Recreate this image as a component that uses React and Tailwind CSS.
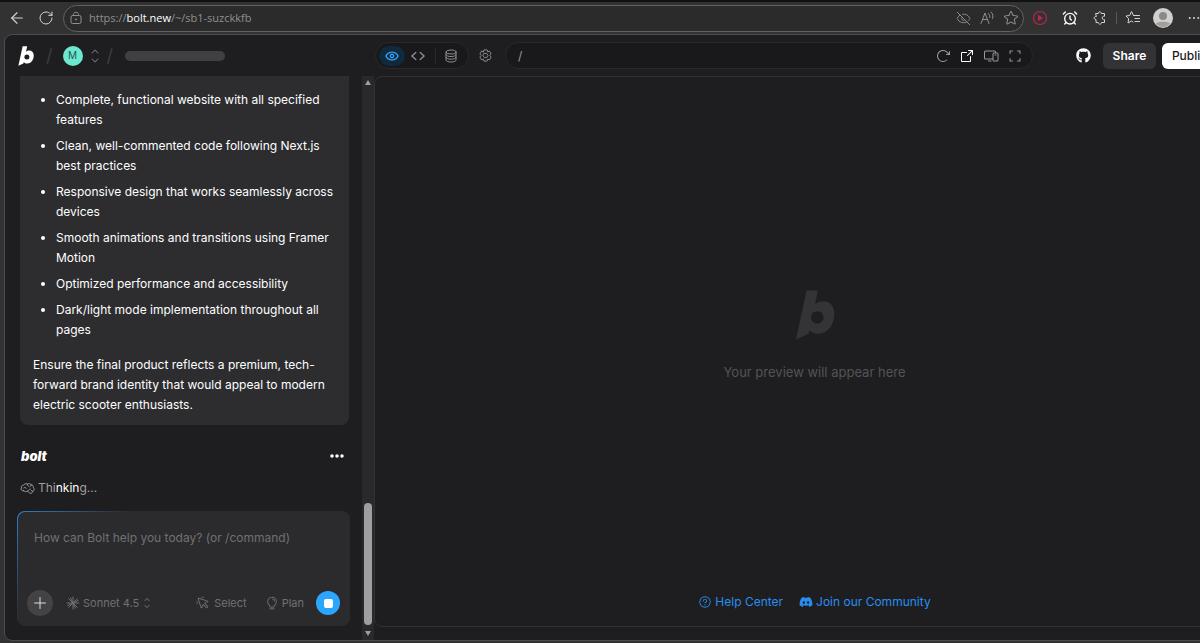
import { AlarmClock, ArrowLeft, EyeOff, RotateCw } from "lucide-react";
import { FaDiscord, FaGithub } from "react-icons/fa";
import {
    PiArrowClockwise,
    PiArrowSquareOut,
    PiCaretUpDown,
    PiCodeSimpleBold,
    PiCornersOut,
    PiCursorClick,
    PiDevices,
    PiDotsThreeBold,
    PiDotsThreeOutlineFill,
    PiEyeBold,
    PiLightbulb,
    PiPlus,
    PiQuestion,
    PiStar,
} from "react-icons/pi";

const features = [
    "Complete, functional website with all specified features",
    "Clean, well-commented code following Next.js best practices",
    "Responsive design that works seamlessly across devices",
    "Smooth animations and transitions using Framer Motion",
    "Optimized performance and accessibility",
    "Dark/light mode implementation throughout all pages",
];

const BoltMark = ({ className }) => (
    <svg viewBox="0 0 124 152" fill="currentColor" className={className} aria-hidden="true">
        <path
            fillRule="evenodd"
            d="M36 0H71L62 43C69 36 78 33 88 33C109 33 122 49 122 72C122 108 100 134 72 134C60 134 51 130 45 122L42 134L3 152ZM69 64A19 19 0 1 0 69 103A19 19 0 1 0 69 64Z"
        />
    </svg>
);

const LineIcon = ({ children, className = "size-4" }) => (
    <svg
        viewBox="0 0 16 16"
        fill="none"
        stroke="currentColor"
        strokeLinecap="round"
        strokeLinejoin="round"
        className={className}
        aria-hidden="true"
    >
        {children}
    </svg>
);

const LockIcon = () => (
    <LineIcon className="size-4 shrink-0">
        <rect x="3" y="5.5" width="10" height="8" rx="1.5" />
        <path d="M5.5 5.5V4.5C5.5 1.500 10.500 1.500 10.500 4.500V5.500" />
        <circle cx="8" cy="9.500" r=".6" fill="currentColor" />
    </LineIcon>
);

const ReadAloudIcon = () => (
    <LineIcon>
        <path d="M2 13.500L6 3L10 13.500M3.500 9.500H8.500M9.500 3.500C10.700 4.700 11 6 10.700 7.500M12 2C14 3.700 14.500 6.500 13.500 8.500" />
    </LineIcon>
);

const MediaIcon = () => (
    <svg viewBox="0 0 16 16" className="size-4" aria-hidden="true">
        <circle cx="8" cy="8" r="6.500" fill="none" stroke="#b8284c" strokeWidth="1.200" />
        <path d="M6 4.800L11 8L6 11.200Z" fill="#b8284c" />
    </svg>
);

const ExtensionsIcon = () => (
    <LineIcon>
        <path d="M4 3.500H6.300C6 1.300 9.500 1.300 9.200 3.500H12.500V6.300H11.500C9.700 6.600 9.700 9.300 11.500 9.600H12.500V12.500H9.500C9.500 14.700 6.200 14.700 6.200 12.500H4V9.500C1.500 9.800 1.500 6.200 4 6.500Z" />
    </LineIcon>
);

const FavoritesIcon = () => (
    <LineIcon>
        <path d="M8.500 5.500L6.500 1.500L4.700 5.500L1 6L3.700 8.800L3 13L6.500 11L8 12M8.500 5.500H14.500M10 8.500H14.500M10 11.500H14.500" />
    </LineIcon>
);

const DatabaseIcon = () => (
    <LineIcon>
        <ellipse cx="8" cy="4" rx="5" ry="2" />
        <path d="M3 4V12C3 14.700 13 14.700 13 12V4M3 6.700C3 9.300 13 9.300 13 6.700M3 9.300C3 12 13 12 13 9.300" />
    </LineIcon>
);

const SettingsIcon = () => (
    <LineIcon className="size-[15px]">
        <path d="M5.800 4L6.300 2H9.700L10.200 4L12.300 3.400L14 6.300L12.600 8L14 9.700L12.300 12.600L10.200 12L9.700 14H6.300L5.800 12L3.700 12.600L2 9.700L3.400 8L2 6.300L3.700 3.400Z" />
        <path d="M6.700 5.700H9.300L10.600 8L9.300 10.300H6.700L5.400 8Z" />
    </LineIcon>
);

const BrainIcon = () => (
    <LineIcon className="size-[15px]">
        <path d="M4 10.500C1.500 11 0.500 8.500 1.500 7.300C1 5.500 2.500 4.300 3.800 4.500C4.700 2.700 6.700 2.500 7.800 3.300C9.300 2.300 11.300 2.900 11.800 4C13.500 4 14.500 5.500 14.200 7C15.800 8.300 15.200 10.700 13.500 11C13.300 13 11 14 9.800 12.500L8 10.700C6.500 11.800 5 11.500 4 10.500Z" />
        <path d="M4 7.300C5 6.300 6.300 6.700 6.500 7.800M7.800 3.300C7.500 4.500 8 5.200 9 5.500M11.800 4C11.800 5.500 11 6 10.500 6.200M8 10.700C9.500 10.500 9.500 8.700 11 8.500M13.500 11C12.700 11 12 10.500 12 10" />
    </LineIcon>
);

const SparkIcon = () => (
    <LineIcon>
        <path d="M8 2V14M2 8H14M3.700 3.700L12.300 12.300M12.300 3.700L3.700 12.300M5.500 2.800L10.500 13.200M13.200 5.500L2.800 10.500" />
    </LineIcon>
);

const BrowserBar = () => (
    <div className="flex h-[34px] shrink-0 items-center overflow-hidden border-t-2 border-[#111111] bg-[#323232] pl-2 text-[#d4d4d4]">
        <button type="button" aria-label="Back" className="shrink-0">
            <ArrowLeft className="size-[18px]" strokeWidth={1.5} />
        </button>
        <button type="button" aria-label="Refresh" className="ml-3 shrink-0">
            <RotateCw className="size-4" strokeWidth={1.5} />
        </button>
        <div className="ml-[9px] flex h-[27px] min-w-0 flex-1 items-center rounded-full border border-[#636363] bg-[#2b2b2b] px-1 text-[#8f8f8f]">
            <LockIcon />
            <p className="ml-[5px] flex-1 truncate font-['Open_Sans','Noto_Sans',sans-serif] text-[11px]">
                https://<span className="text-white">bolt.new</span>/~/sb1-suzckkfb
            </p>
            <div className="flex items-center gap-2">
                <button type="button" aria-label="Tracking prevention">
                    <EyeOff className="size-[15px]" strokeWidth={1.5} />
                </button>
                <button type="button" aria-label="Read aloud">
                    <ReadAloudIcon />
                </button>
                <button type="button" aria-label="Bookmark">
                    <PiStar className="size-4" />
                </button>
            </div>
        </div>
        <div className="ml-2 flex shrink-0 items-center gap-[14px]">
            <button type="button" aria-label="Media">
                <MediaIcon />
            </button>
            <button type="button" aria-label="Alarm">
                <AlarmClock className="size-4 text-white" />
            </button>
            <button type="button" aria-label="Extensions">
                <ExtensionsIcon />
            </button>
        </div>
        <span className="mx-2 h-3 w-px bg-[#5a5a5a]" />
        <button type="button" aria-label="Favorites">
            <FavoritesIcon />
        </button>
        <button type="button" aria-label="Profile" className="ml-3 shrink-0">
            <svg viewBox="0 0 20 20" className="size-5" aria-hidden="true">
                <circle cx="10" cy="10" r="10" fill="#d2d0ce" />
                <circle cx="10" cy="8" r="4" fill="#8b8987" />
                <path d="M3 15.500C4 13 16 13 17 15.500C14 20 6 20 3 15.500Z" fill="#a19f9d" />
            </svg>
        </button>
        <button type="button" aria-label="More" className="-mr-[2px] ml-[13px] shrink-0">
            <PiDotsThreeBold className="size-4" />
        </button>
    </div>
);

const AppHeader = () => (
    <header className="flex h-[41px] shrink-0 items-center">
        <div className="flex w-[370px] shrink-0 items-center pl-[13px]">
            <BoltMark className="h-5 w-4 text-white" />
            <span className="ml-3 text-lg text-[#3c3c3f]">/</span>
            <span className="ml-[10px] flex size-5 items-center justify-center rounded-full bg-[#6ee7cf] text-[10px] text-[#1d5b52]">M</span>
            <button type="button" aria-label="Switch workspace" className="ml-1 text-[#77777a]">
                <PiCaretUpDown className="size-4" />
            </button>
            <span className="ml-1 text-lg text-[#3c3c3f]">/</span>
            <span className="ml-3 h-[10px] w-[100px] rounded-full bg-[#404042]" />
        </div>
        <div className="flex h-[27px] w-[94px] shrink-0 items-center rounded-full border border-[#29292c] bg-[#19191b] px-[3px] text-[#8f8f93]">
            <button type="button" aria-label="Preview" className="flex h-5 w-[26px] items-center justify-center rounded-full bg-[#10293c] text-[#349df4]">
                <PiEyeBold className="size-[14px]" />
            </button>
            <button type="button" aria-label="Code" className="flex h-5 w-[26px] items-center justify-center">
                <PiCodeSimpleBold className="size-[14px]" />
            </button>
            <span className="ml-1 h-4 w-px bg-[#29292c]" />
            <button type="button" aria-label="Database" className="flex h-5 flex-1 items-center justify-center">
                <DatabaseIcon />
            </button>
        </div>
        <button type="button" aria-label="Settings" className="ml-[9px] shrink-0 text-[#8f8f93]">
            <SettingsIcon />
        </button>
        <div className="ml-3 flex h-[27px] min-w-0 flex-1 items-center gap-2 rounded-full border border-[#29292c] bg-[#19191b] pr-[9px] pl-3 text-[#9a9a9e]">
            <input aria-label="Preview path" defaultValue="/" className="min-w-0 flex-1 bg-transparent text-[12px] outline-none" />
            <button type="button" aria-label="Reload">
                <PiArrowClockwise className="size-4" />
            </button>
            <button type="button" aria-label="Open in new tab" className="text-white">
                <PiArrowSquareOut className="size-4" />
            </button>
            <button type="button" aria-label="Devices">
                <PiDevices className="size-4" />
            </button>
            <button type="button" aria-label="Fullscreen">
                <PiCornersOut className="size-4" />
            </button>
        </div>
        <div className="mr-[31px] ml-[43px] flex shrink-0 items-center text-[12px]">
            <a href="#github" aria-label="GitHub" className="text-white">
                <FaGithub className="size-[15px]" />
            </a>
            <button type="button" className="ml-3 h-[26px] w-[53px] rounded-md bg-[#333336] font-semibold text-white">
                Share
            </button>
            <button type="button" className="ml-[6px] h-[26px] rounded-md bg-white px-[10px] font-medium text-[#19191b]">
                Publish
            </button>
        </div>
    </header>
);

const Composer = () => (
    <form className="mx-3 mt-auto mb-[14px] rounded-lg bg-linear-135 from-[#2c82cc] to-[#2b2b2e] to-25% p-px" onSubmit={(e) => e.preventDefault()}>
        <div className="rounded-[7px] bg-[#2b2b2e] text-[#707074]">
            <textarea
                aria-label="Message"
                placeholder="How can Bolt help you today? (or /command)"
                className="block h-[78px] w-full resize-none bg-transparent px-4 pt-4 text-[12px] leading-5 outline-none placeholder:text-[#707074]"
            />
            <div className="flex items-center px-[9px] pb-[9px] text-[11px]">
                <button type="button" aria-label="Add" className="flex size-[26px] items-center justify-center rounded-full bg-[#434345] text-[#dcdcdf]">
                    <PiPlus className="size-4" />
                </button>
                <button type="button" className="ml-3 flex items-center gap-[2px]">
                    <SparkIcon />
                    Sonnet 4.5
                    <PiCaretUpDown className="size-3" />
                </button>
                <button type="button" className="ml-auto flex items-center gap-1">
                    <PiCursorClick className="size-[14px]" />
                    Select
                </button>
                <button type="button" className="ml-[18px] flex items-center gap-[3px]">
                    <PiLightbulb className="size-[14px]" />
                    Plan
                </button>
                <button type="submit" aria-label="Stop" className="ml-3 flex size-6 items-center justify-center rounded-full bg-[#2ba6ff]">
                    <span className="size-[9px] rounded-[2px] bg-white" />
                </button>
            </div>
        </div>
    </form>
);

const ChatPanel = () => (
    <section className="flex w-[357px] shrink-0 flex-col overflow-hidden">
        <article className="mr-[13px] ml-[15px] rounded-b-lg bg-[#2d2d30] px-[13px] pt-[14px] pb-[10px] text-[12px] leading-5 text-white">
            <ul className="flex list-disc flex-col gap-[6px] pl-[23px]">
                {features.map((feature) => (
                    <li key={feature}>{feature}</li>
                ))}
            </ul>
            <p className="mt-[15px]">
                Ensure the final product reflects a premium, tech-forward brand identity that would appeal to modern electric scooter
                enthusiasts.
            </p>
        </article>
        <div className="mt-[21px] flex items-center justify-between pr-[17px] pl-4 text-white">
            <span className="text-[13px] leading-5 font-black italic">bolt</span>
            <button type="button" aria-label="Message options">
                <PiDotsThreeOutlineFill className="size-4" />
            </button>
        </div>
        <p className="mt-3 flex items-center gap-[3px] pl-[15px] text-[12px] leading-5 text-[#a0a0a4]">
            <BrainIcon />
            <span>
                Thi<span className="text-white">nkin</span>g...
            </span>
        </p>
        <Composer />
    </section>
);

const Scrollbar = () => (
    <div className="flex w-3 shrink-0 flex-col items-center bg-[#29292b] py-1" aria-hidden="true">
        <span className="border-x-[3px] border-b-[5px] border-x-transparent border-b-[#9f9f9f]" />
        <span className="mt-auto mb-[6px] h-[122px] w-2 rounded-full bg-[#9f9f9f]" />
        <span className="border-x-[3px] border-t-[5px] border-x-transparent border-t-[#9f9f9f]" />
    </div>
);

const PreviewPanel = () => (
    <main className="mb-[13px] flex min-w-0 flex-1 flex-col items-center rounded-lg border border-[#323235]">
        <div className="flex flex-1 flex-col items-center justify-center pt-1">
            <BoltMark className="h-[50px] w-10 text-[#343437]" />
            <p className="mt-5 text-[13px] leading-6 text-[#535356]">Your preview will appear here</p>
        </div>
        <div className="mb-[14px] flex items-center gap-4 text-[12px] leading-5 text-[#288df0]">
            <a href="#help" className="flex items-center gap-[3px]">
                <PiQuestion className="size-[14px]" />
                Help Center
            </a>
            <a href="#community" className="flex items-center gap-[3px]">
                <FaDiscord className="size-[14px]" />
                Join our Community
            </a>
        </div>
    </main>
);

const App = () => (
    <div className="flex h-screen flex-col overflow-hidden bg-[#323232] font-['Inter',sans-serif]">
        <BrowserBar />
        {/* the workspace is wider than the window and runs off its right edge */}
        <div className="-mr-[56px] mb-[2px] ml-1 flex min-h-0 flex-1 flex-col overflow-hidden rounded-lg border border-[#4c4c4e] bg-[#1e1e20]">
            <AppHeader />
            <div className="flex min-h-0 flex-1">
                <ChatPanel />
                <Scrollbar />
                <PreviewPanel />
            </div>
        </div>
    </div>
);

export default App;
